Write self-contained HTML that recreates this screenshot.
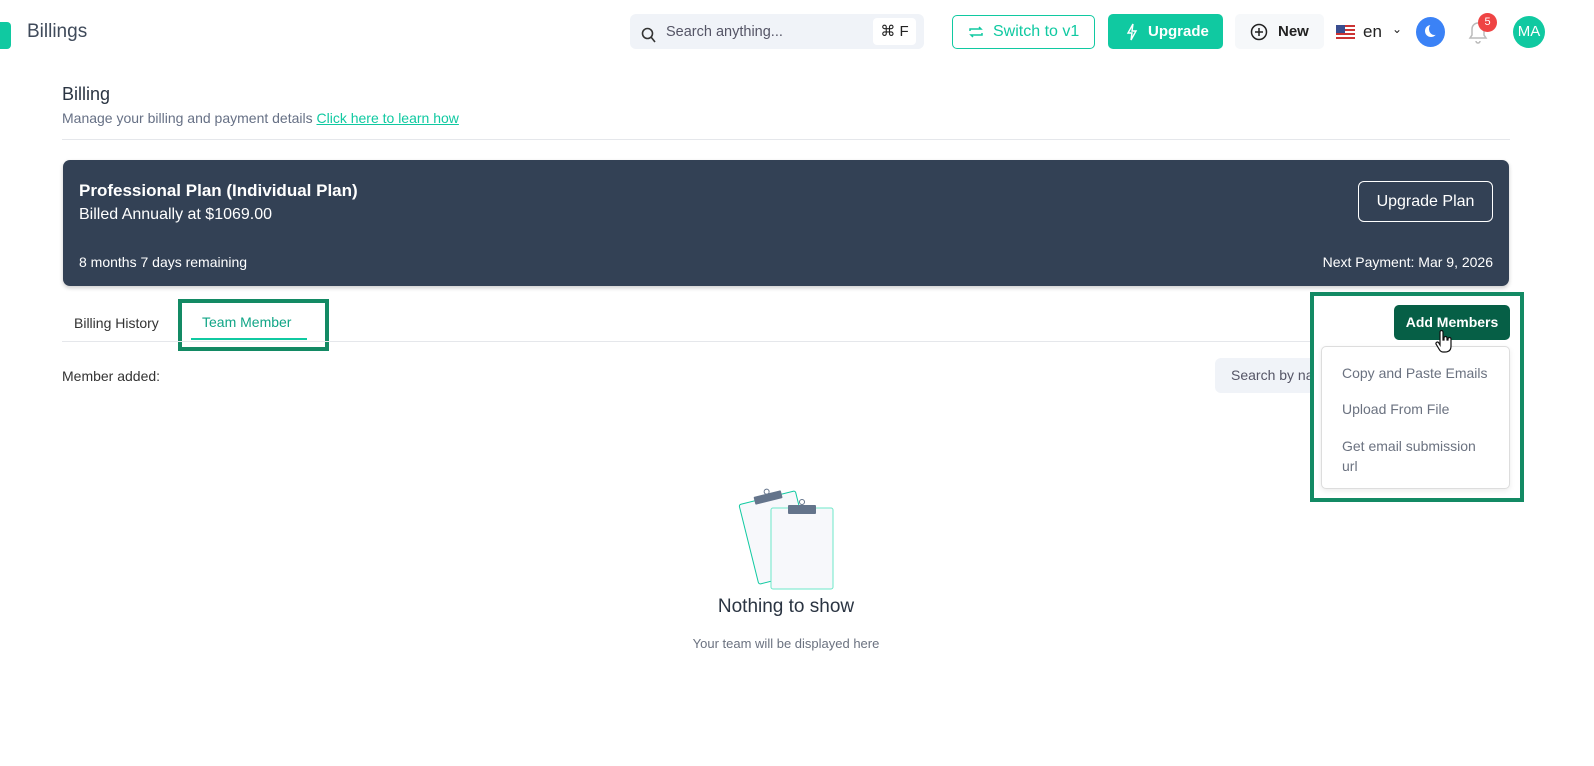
<!DOCTYPE html>
<html><head><meta charset="utf-8"><style>
*{box-sizing:border-box;margin:0;padding:0}
body{width:1594px;height:766px;background:#fff;font-family:"Liberation Sans",sans-serif;color:#334155;position:relative;overflow:hidden}
.a{position:absolute}
</style></head><body>
<div class="a" style="left:-4px;top:22px;width:15px;height:27px;background:#10c9a1;border-radius:4px"></div>
<div class="a" style="left:27px;top:21px;font-size:19px;color:#3f4a5a">Billings</div>

<div class="a" style="left:630px;top:14px;width:294px;height:35px;background:#f0f3f8;border-radius:6px"></div>
<svg class="a" style="left:641px;top:27px" width="15" height="16" viewBox="0 0 15 16"><circle cx="6.5" cy="6.5" r="5" fill="none" stroke="#333" stroke-width="1.6"/><path d="M10 10l4 5" stroke="#333" stroke-width="1.6"/></svg>
<div class="a" style="left:666px;top:24px;font-size:14.5px;color:#556">Search anything...</div>
<div class="a" style="left:873px;top:18px;width:43px;height:27px;background:#fff;border-radius:4px;font-size:15px;text-align:center;line-height:27px;color:#222">⌘ F</div>

<div class="a" style="left:952px;top:15px;width:143px;height:34px;border:1.5px solid #10c9a1;border-radius:5px;color:#10c9a1;font-size:16px;line-height:31px;padding-left:40px">Switch to v1</div>
<svg class="a" style="left:968px;top:24px" width="16" height="16" viewBox="0 0 16 16" fill="none" stroke="#10c9a1" stroke-width="1.5"><path d="M2 7V5h11l-2-2M14 9v2H3l2 2"/></svg>
<div class="a" style="left:1108px;top:14px;width:115px;height:35px;background:#10c9a1;border-radius:5px;color:#fff;font-size:15px;font-weight:bold;line-height:35px;padding-left:40px">Upgrade</div>
<svg class="a" style="left:1126px;top:23px" width="12" height="18" viewBox="0 0 12 18" fill="none" stroke="#fff" stroke-width="1.4"><path d="M7 1L2 10h4l-1 7 5-9H6z"/></svg>
<div class="a" style="left:1235px;top:14px;width:89px;height:35px;background:#f6f8fa;border-radius:5px;font-size:15px;font-weight:bold;color:#222;line-height:35px;padding-left:43px">New</div>
<svg class="a" style="left:1250px;top:23px" width="18" height="18" viewBox="0 0 18 18" fill="none" stroke="#222" stroke-width="1.5"><circle cx="9" cy="9" r="7.5"/><path d="M9 5v8M5 9h8"/></svg>
<div class="a" style="left:1336px;top:25px;width:19px;height:14px;background:repeating-linear-gradient(#c33 0 2px,#fff 2px 4px)"></div>
<div class="a" style="left:1336px;top:25px;width:9px;height:8px;background:#3a4d8f"></div>
<div class="a" style="left:1363px;top:22px;font-size:17px;color:#222">en</div>
<div class="a" style="left:1392px;top:22px;font-size:12px;color:#222">⌄</div>
<div class="a" style="left:1416px;top:17px;width:29px;height:30px;border-radius:50%;background:#3b82f6"></div>
<div class="a" style="left:1425px;top:25px;width:12px;height:12px;border-radius:50%;background:#fff"></div>
<div class="a" style="left:1429px;top:23px;width:11px;height:12px;border-radius:50%;background:#3b82f6"></div>
<svg class="a" style="left:1466px;top:18px" width="24" height="28" viewBox="0 0 24 28" fill="none" stroke="#bbb" stroke-width="1.5"><path d="M4 20h16l-2-3v-6a6 6 0 0 0-12 0v6zM10 23a2 2 0 0 0 4 0"/></svg>
<div class="a" style="left:1478px;top:13px;width:19px;height:19px;border-radius:50%;background:#ef4444;color:#fff;font-size:11px;text-align:center;line-height:19px">5</div>
<div class="a" style="left:1513px;top:16px;width:32px;height:32px;border-radius:50%;background:#10c9a1;color:#fff;font-size:15px;text-align:center;line-height:32px">MA</div>

<div class="a" style="left:62px;top:84px;font-size:18px;color:#2a3442">Billing</div>
<div class="a" style="left:62px;top:110px;font-size:14px;color:#667085">Manage your billing and payment details <span style="color:#10c9a1;text-decoration:underline">Click here to learn how</span></div>
<div class="a" style="left:62px;top:139px;width:1448px;height:1px;background:#e5e7eb"></div>

<div class="a" style="left:63px;top:160px;width:1446px;height:126px;background:#334155;border-radius:7px;box-shadow:0 2px 4px rgba(0,0,0,.2)"></div>
<div class="a" style="left:79px;top:181px;font-size:17px;font-weight:bold;color:#fff">Professional Plan (Individual Plan)</div>
<div class="a" style="left:79px;top:206px;font-size:16px;color:#fff">Billed Annually at $1069.00</div>
<div class="a" style="left:79px;top:254px;font-size:14px;color:#fff">8 months 7 days remaining</div>
<div class="a" style="left:1300px;top:254px;width:193px;text-align:right;font-size:14px;color:#fff">Next Payment: Mar 9, 2026</div>
<div class="a" style="left:1358px;top:181px;width:135px;height:41px;border:1px solid #fff;border-radius:6px;color:#fff;font-size:16px;text-align:center;line-height:39px">Upgrade Plan</div>

<div class="a" style="left:74px;top:315px;font-size:14px;color:#333">Billing History</div>
<div class="a" style="left:178px;top:299px;width:151px;height:52px;border:4px solid #138a64"></div>
<div class="a" style="left:202px;top:314px;font-size:14px;color:#10a586">Team Member</div>
<div class="a" style="left:191px;top:338px;width:116px;height:2px;background:#10c9a1"></div>
<div class="a" style="left:62px;top:341px;width:1448px;height:1px;background:#e5e7eb"></div>

<div class="a" style="left:62px;top:368px;font-size:14px;color:#333">Member added:</div>
<div class="a" style="left:1215px;top:358px;width:120px;height:35px;background:#f0f3f8;border-radius:6px;font-size:14px;color:#556;line-height:35px;padding-left:16px;white-space:nowrap;overflow:hidden">Search by name</div>

<div class="a" style="left:1310px;top:292px;width:214px;height:210px;border:4px solid #138a64;background:#fff"></div>
<div class="a" style="left:1394px;top:305px;width:116px;height:35px;background:#065f46;border-radius:5px;color:#fff;font-size:14px;font-weight:bold;text-align:center;line-height:35px">Add Members</div>
<div class="a" style="left:1321px;top:346px;width:189px;height:143px;border:1px solid #ddd;border-radius:5px;background:#fff;box-shadow:0 2px 6px rgba(0,0,0,.08)"></div>
<div class="a" style="left:1342px;top:365px;font-size:14px;color:#6b7280">Copy and Paste Emails</div>
<div class="a" style="left:1342px;top:401px;font-size:14px;color:#6b7280">Upload From File</div>
<div class="a" style="left:1342px;top:436px;font-size:14px;color:#6b7280;line-height:20px">Get email submission<br>url</div>
<svg class="a" style="left:1434px;top:330px" width="20" height="24" viewBox="0 0 20 24"><path d="M6 2a1.5 1.5 0 0 1 3 0v8h1V8a1.5 1.5 0 0 1 3 0v2h1V9a1.5 1.5 0 0 1 3 0v7c0 4-2 6-6 6H9c-2 0-3-1-4-3l-3-5a1.5 1.5 0 0 1 2.5-1.5L6 15z" fill="#fff" stroke="#111" stroke-width="1.2"/></svg>

<svg class="a" style="left:720px;top:470px" width="140" height="120" viewBox="0 0 140 120">
<g transform="rotate(-14 50 60)"><rect x="26" y="28" width="58" height="82" rx="2" fill="#f7f8fb" stroke="#10c9a1" stroke-width="1"/><rect x="42" y="24" width="28" height="8" rx="1" fill="#64748b"/><circle cx="56" cy="22" r="2.5" fill="none" stroke="#64748b"/></g>
<rect x="51" y="38" width="62" height="81" rx="2" fill="#f7f8fb" stroke="#6ee7c8" stroke-width="1"/>
<rect x="68" y="35" width="28" height="9" rx="1" fill="#64748b"/><circle cx="82" cy="32" r="2.5" fill="none" stroke="#64748b"/>
</svg>
<div class="a" style="left:586px;top:596px;width:400px;text-align:center;font-size:19px;color:#2a3442">Nothing to show</div>
<div class="a" style="left:586px;top:636px;width:400px;text-align:center;font-size:13px;color:#6b7280">Your team will be displayed here</div>
</body></html>
